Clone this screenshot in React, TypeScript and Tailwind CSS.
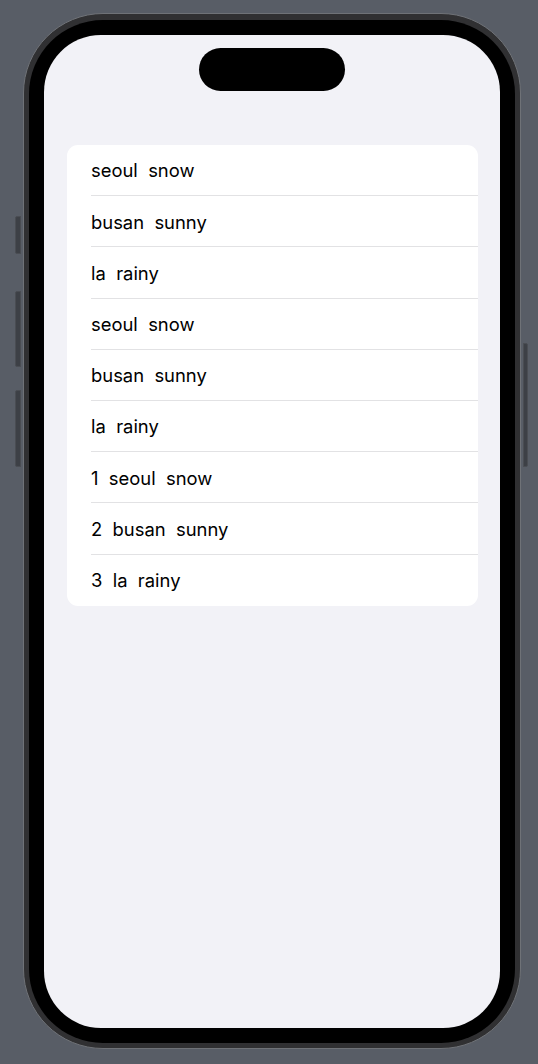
const rows = [
  "seoul  snow",
  "busan  sunny",
  "la  rainy",
  "seoul  snow",
  "busan  sunny",
  "la  rainy",
  "1  seoul  snow",
  "2  busan  sunny",
  "3  la  rainy",
];

export default function App() {
  return (
    <div className="min-h-[1064px] w-full bg-[#585d66] pt-[13px] pl-[23px] font-['Inter','Noto_Sans',sans-serif]">
      <div className="relative w-[498px] h-[1036px]">
        {/* hardware buttons */}
        <div className="absolute left-[-8px] top-[203px] w-[6px] h-[38px] rounded-l-[2px] bg-[#3d4046] border border-[#4a4d53]" />
        <div className="absolute left-[-8px] top-[278px] w-[6px] h-[76px] rounded-l-[2px] bg-[#3d4046] border border-[#4a4d53]" />
        <div className="absolute left-[-8px] top-[377px] w-[6px] h-[77px] rounded-l-[2px] bg-[#3d4046] border border-[#4a4d53]" />
        <div className="absolute right-[-7px] top-[330px] w-[5px] h-[124px] rounded-r-[2px] bg-[#3d4046] border border-[#4a4d53]" />

        {/* frame */}
        <div className="w-full h-full rounded-[80px] bg-[#303032] border border-[#6f7277] px-[5px] pt-[6px] pb-[5px]">
          <div className="w-full h-full rounded-[74px] bg-black px-[15px] pt-[15px] pb-[15px]">
            <div className="w-full h-full rounded-[57px] bg-[#f2f2f7] flex flex-col overflow-hidden">
              <div className="self-center mt-[13px] w-[146px] h-[43px] rounded-full bg-black" />

              <div className="mt-[54px] ml-[23px] mr-[22px] bg-white rounded-[11px] overflow-hidden">
                {rows.map((r, i) => (
                  <div key={i} className="pl-[24px] h-[51.2px] flex flex-col">
                    <div className="flex-1 flex items-center pt-px text-[18.4px] text-black whitespace-pre leading-none">
                      {r}
                    </div>
                    {i < rows.length - 1 && <div className="h-px bg-[#e2e2e4]" />}
                  </div>
                ))}
              </div>
            </div>
          </div>
        </div>
      </div>
    </div>
  );
}
